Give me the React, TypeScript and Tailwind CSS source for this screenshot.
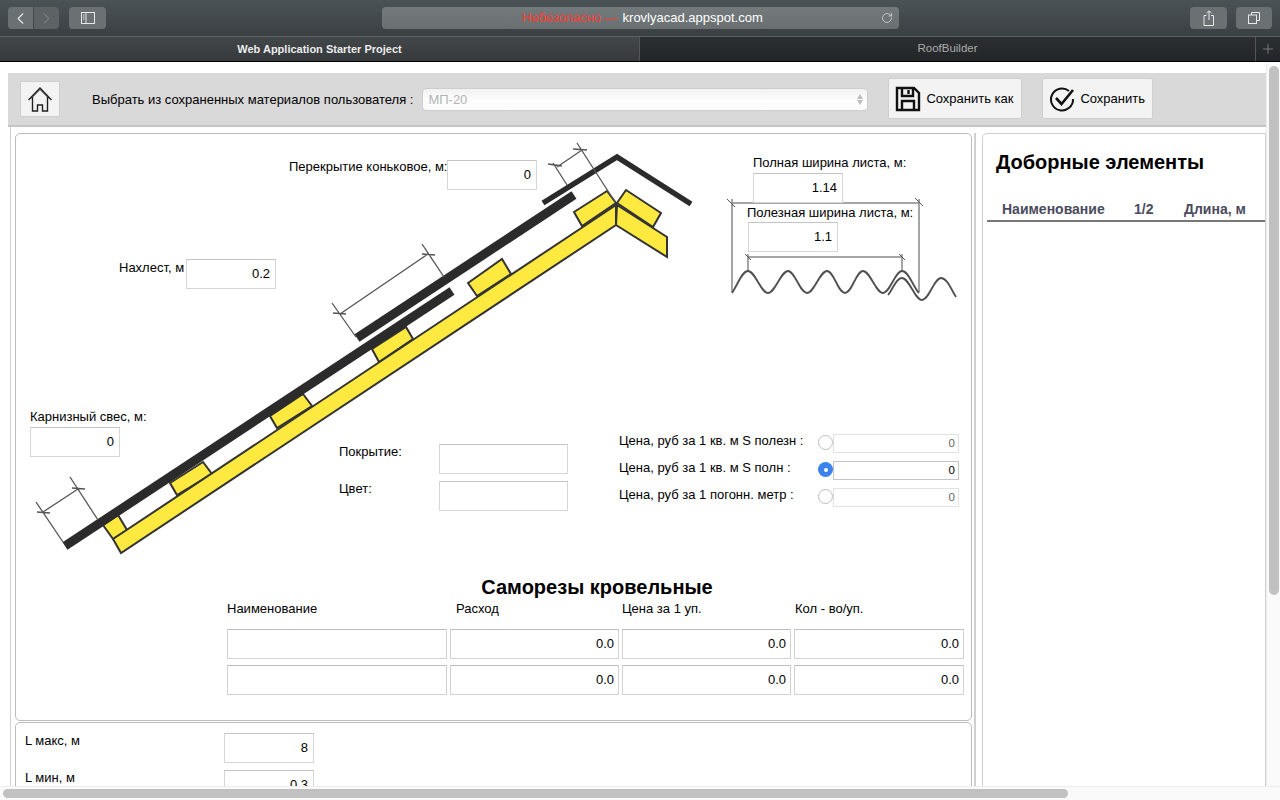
import React from 'react';
import { ChevronLeft, ChevronRight, RotateCw, Plus } from 'lucide-react';

const font = "font-['Liberation_Sans',Arial,sans-serif]";

function Field({ value, className }: { value: string; className: string }) {
  return (
    <div className={`absolute h-[30px] flex items-center justify-end pr-[5px] bg-white border border-[#d6d6d6] border-t-[#c4c4c4] text-[13px] text-black ${className}`}>
      {value}
    </div>
  );
}

function Label({ children, className }: { children: React.ReactNode; className: string }) {
  return <div className={`absolute whitespace-nowrap text-[13px] leading-[15px] text-black ${className}`}>{children}</div>;
}

function PriceRow({ label, value, checked }: { label: string; value: string; checked?: boolean }) {
  return (
    <div className="flex items-center h-[27px]">
      <div className="w-[199px] text-[13px] text-black whitespace-nowrap pb-[3px]">{label}</div>
      {checked ? (
        <div className="w-[15px] h-[15px] rounded-full bg-[#3b82ee] flex items-center justify-center">
          <div className="w-[4px] h-[4px] rounded-full bg-white" />
        </div>
      ) : (
        <div className="w-[15px] h-[15px] rounded-full bg-white border border-[#bdbdbd]" />
      )}
      <div
        className={`w-[126px] h-[19px] mt-[2px] flex items-center justify-end pr-[3px] text-[11.5px] border ${
          checked ? 'border-[#c4c4c4] text-black bg-white' : 'border-[#e2e2e2] text-[#666] bg-white'
        }`}
      >
        {value}
      </div>
    </div>
  );
}

function RoofDrawing() {
  const yellow = '#fde93f';
  const edge = '#333333';
  const dim = '#555555';
  const battens = [
    '103,525 118,515 127,530 113,539',
    '170,483 203,462 212,474 177,495',
    '270,416 303,394 312,406 277,428',
    '372,349 406,327 413,339 379,362',
    '468,283 502,259 511,274 477,296',
    '574,212 607,191 616,203 582,226',
    '626,190 661,213 653,227 617,203',
  ];
  const dims = [
    // eaves overhang
    'M36 502L63 542M70 477L98 520M43 512L78 489M37 512L50 513M72 488L85 489',
    // lap
    'M332 303L356 337M422 244L444 277M340 314L428 254M333 313L346 314M422 254L435 255',
    // ridge overlap
    'M553 163L567 185M577 143L615 202M557 167L582 150M548 164L562 166M573 149L587 150',
  ];
  return (
    <svg className="absolute left-0 top-0" width="980" height="600" viewBox="16 134 980 600">
      {battens.map(p => (
        <polygon key={p} points={p} fill={yellow} stroke={edge} strokeWidth="2" />
      ))}
      <polygon points="113,539 121,553 616,225 616,205" fill={yellow} stroke={edge} strokeWidth="2" />
      <polygon points="617,205 667,237 667,257 616,225" fill={yellow} stroke={edge} strokeWidth="2" />
      <path d="M65 546L452 291" stroke="#2b2b2b" strokeWidth="9" fill="none" />
      <path d="M357 338L574 195" stroke="#2b2b2b" strokeWidth="9" fill="none" />
      <path d="M543 203L617 157L691 204" stroke="#2b2b2b" strokeWidth="5.500" fill="none" />
      {dims.map(d => (
        <path key={d} d={d} stroke={dim} strokeWidth="1.3" fill="none" />
      ))}
      {/* sheet profile */}
      <path d="M732 203H919M732 199V292M919 199V292" stroke="#888" strokeWidth="1.5" fill="none" />
      <path d="M727 199L735 207M915 198L923 206" stroke="#555" strokeWidth="1" fill="none" />
      <path d="M748 257H902M748 254V271M902 254V271" stroke="#888" strokeWidth="1.5" fill="none" />
      <path d="M745 254L751 260M899 254L905 260" stroke="#555" strokeWidth="1" fill="none" />
      <path
        d="M732 293C738 284 742 271 748 271C755 271 761 293 768 293C775 293 781 271 788 271C795 271 800 293 807 293C814 293 820 271 827 271C834 271 838 293 845 293C852 293 856 271 863 271C870 271 876 293 883 293C890 293 895 271 902 271C909 271 913 287 919 293"
        stroke="#505050"
        strokeWidth="1.800"
        fill="none"
      />
      <path
        d="M888 295C893 289 896 278 902 278C909 278 915 300 922 300C929 300 934 278 941 278C947 278 951 289 956 297"
        stroke="#505050"
        strokeWidth="1.800"
        fill="none"
      />
    </svg>
  );
}

function ToolButton({ icon, label, className }: { icon: React.ReactNode; label: string; className: string }) {
  return (
    <div className={`h-[41px] flex items-center bg-[#f3f3f3] border border-[#cfcfcf] rounded-[2px] text-[13px] text-black ${className}`}>
      {icon}
      {label}
    </div>
  );
}

export default function App() {
  return (
    <div className={`w-[1280px] h-[800px] overflow-hidden flex flex-col bg-white ${font}`}>
      {/* browser chrome */}
      <div className="h-[37px] bg-gradient-to-b from-[#4c5356] to-[#3a3f42] border-b border-[#5c6264] flex items-center px-[7px]">
        <div className="w-[25px] h-[22px] ml-px rounded-l-[4px] bg-[#6b7072] flex items-center justify-center">
          <ChevronLeft size={19} strokeWidth={1.4} className="text-[#e8e8e8]" />
        </div>
        <div className="w-[25px] h-[22px] ml-px rounded-r-[4px] bg-[#5d6264] flex items-center justify-center">
          <ChevronRight size={19} strokeWidth={1.2} className="text-[#8d9193]" />
        </div>
        <div className="w-[37px] h-[22px] ml-[10px] rounded-[4px] bg-[#6b7072] flex items-center justify-center">
          <svg width="14" height="12" viewBox="0 0 14 12" fill="none" stroke="#e8e8e8">
            <rect x="0.5" y="0.5" width="13" height="11" />
            <path d="M5 0.5V11.5M2 3H3.5M2 5H3.5M2 7H3.5" />
          </svg>
        </div>
        <div className="ml-[276px] w-[517px] h-[22px] rounded-[4px] bg-gradient-to-b from-[#747a7c] to-[#6a6f71] flex items-center text-[13px]">
          <div className="ml-[140px] text-[#ff3b30] whitespace-nowrap">Небезопасно —</div>
          <div className="ml-[5px] text-white whitespace-nowrap">krovlyacad.appspot.com</div>
          <RotateCw size={12} strokeWidth={1.3} className="ml-auto mr-[6px] text-[#e8e8e8]" />
        </div>
        <div className="ml-auto w-[37px] h-[22px] rounded-[4px] bg-[#6b7072] flex items-center justify-center">
          <svg width="12" height="16" viewBox="0 0 12 16" fill="none" stroke="#e8e8e8">
            <path d="M3.5 5.5H1V15.5H10.5V5.5H8M6 10V1M3.5 3L6 .8L8.500 3" />
          </svg>
        </div>
        <div className="ml-[9px] w-[36px] h-[22px] rounded-[4px] bg-[#6b7072] flex items-center justify-center mr-px">
          <svg width="12" height="12" viewBox="0 0 12 12" fill="none" stroke="#e8e8e8">
            <rect x="0.5" y="3" width="8" height="8.500" />
            <path d="M3.500 3V.5H11.500V8.500H8.500" />
          </svg>
        </div>
      </div>
      <div className="h-[25px] flex items-center border-b border-black text-[11px] font-bold">
        <div className="w-[639px] h-full bg-gradient-to-b from-[#42474a] to-[#363a3d] flex items-center justify-center text-[#ececec]">
          Web Application Starter Project
        </div>
        <div className="w-[616px] h-full bg-gradient-to-b from-[#2c2f31] to-[#232628] flex items-center justify-center text-[11.500px] text-[#a9abac] font-normal border-l border-[#555]">
          RoofBuilder
        </div>
        <div className="flex-1 h-full bg-gradient-to-b from-[#2c2f31] to-[#232628] border-l border-[#555] flex items-center justify-center">
          <Plus size={16} strokeWidth={1} className="text-[#999]" />
        </div>
      </div>

      {/* page */}
      <div className="relative flex-1 overflow-hidden pt-[11px] pl-[8px]">
        <div className="w-[1259px] h-[54px] bg-[#d9d9d9] border-b-2 border-[#c6c6c6] flex items-start text-[13px] text-black">
          <div className="ml-[12px] mt-[8px] w-[40px] h-[36px] bg-[#f3f3f3] border border-[#cfcfcf] rounded-[2px] flex items-center justify-center">
            <svg width="26" height="27" viewBox="0 0 26 27" fill="none" stroke="#222" strokeWidth="1.4">
              <path d="M1.500 14L13 2L24.500 14M5.500 11V25H10.500V19H15.500V25H20.500V11" />
              <path d="M4 12.500L13 3.500L22 12.500" strokeWidth="1" />
            </svg>
          </div>
          <div className="ml-[32px] mt-[17px] whitespace-nowrap">Выбрать из сохраненных материалов пользователя :</div>
          <div className="ml-[9px] mt-[15px] w-[446px] h-[23px] rounded-[4px] border border-[#cdcdcd] bg-gradient-to-b from-[#f1f1f1] via-[#fdfdfd] to-[#fbfbfb] flex items-center pl-[5px] text-[#b3b3b3] relative">
            МП-20
            <div className="absolute right-[4px] top-[5px] flex flex-col gap-[1px]">
              <div className="w-0 h-0 border-x-[3px] border-x-transparent border-b-[5px] border-b-[#bdbdbd]" />
              <div className="w-0 h-0 border-x-[3px] border-x-transparent border-t-[5px] border-t-[#bdbdbd]" />
            </div>
          </div>
          <ToolButton
            className="ml-[20px] mt-[5px] w-[134px] pl-[6px]"
            label="Сохранить как"
            icon={
              <svg width="26" height="26" viewBox="0 0 26 26" fill="none" stroke="#111" strokeWidth="2.4" className="mr-[5px]">
                <path d="M2 2H19L24 7V24H2ZM7 2V10H18V2M13.500 4V8M7 24V15H19V24" />
              </svg>
            }
          />
          <ToolButton
            className="ml-[20px] mt-[5px] w-[111px] pl-[6px]"
            label="Сохранить"
            icon={
              <svg width="26" height="26" viewBox="0 0 26 26" fill="none" stroke="#111" strokeWidth="2" className="mr-[5px]">
                <path d="M20 5A11 11 0 1 0 24 13" />
                <path d="M7 12L12.500 18L24 4" strokeWidth="2.600" />
              </svg>
            }
          />
        </div>

        <div className="ml-[2px] flex items-start border-l border-[#d0d0d0] pl-[4px] pt-[6px] h-[700px]">
          <div className="w-[961px] h-[694px] border-r-2 border-[#d0d0d0] shrink-0">
            <div className="w-[957px] flex flex-col gap-px">
              {/* roof panel */}
              <div className="relative h-[588px] border border-[#bcbcbc] rounded-[5px] bg-white">
                <RoofDrawing />
                <Label className="left-[273px] top-[25px]">Перекрытие коньковое, м:</Label>
                <Field className="left-[431px] top-[26px] w-[90px]" value="0" />
                <Label className="left-[737px] top-[21px]">Полная ширина листа, м:</Label>
                <Field className="left-[737px] top-[39px] w-[90px]" value="1.14" />
                <Label className="left-[731px] top-[71px]">Полезная ширина листа, м:</Label>
                <Field className="left-[732px] top-[88px] w-[90px]" value="1.1" />
                <Label className="left-[103px] top-[126px]">Нахлест, м</Label>
                <Field className="left-[170px] top-[125px] w-[90px]" value="0.2" />
                <Label className="left-[14px] top-[275px]">Карнизный свес, м:</Label>
                <Field className="left-[14px] top-[293px] w-[90px]" value="0" />
                <Label className="left-[323px] top-[310px]">Покрытие:</Label>
                <Field className="left-[423px] top-[310px] w-[129px]" value="" />
                <Label className="left-[323px] top-[347px]">Цвет:</Label>
                <Field className="left-[423px] top-[347px] w-[129px]" value="" />
                <div className="absolute left-[603px] top-[295px]">
                  <PriceRow label="Цена, руб за 1 кв. м S полезн :" value="0" />
                  <PriceRow label="Цена, руб за 1 кв. м S полн :" value="0" checked />
                  <PriceRow label="Цена, руб за 1 погонн. метр :" value="0" />
                </div>
                <div className="absolute left-[211px] top-[441px] w-[737px]">
                  <div className="text-[20px] leading-[24px] font-bold text-center text-black pl-[3px]">Саморезы кровельные</div>
                  <div className="grid grid-cols-[220px_169px_169px_170px] gap-x-[3px] gap-y-[6px] text-[13px] text-black">
                    <div className="h-[24px]">Наименование</div>
                    <div className="h-[24px] pl-[6px]">Расход</div>
                    <div className="h-[24px]">Цена за 1 уп.</div>
                    <div className="h-[24px] pl-px">Кол - во/уп.</div>
                    {['', '0.0', '0.0', '0.0', '', '0.0', '0.0', '0.0'].map((v, i) => (
                      <div
                        key={i}
                        className="h-[30px] border border-[#d2d2d2] border-t-[#bdbdbd] bg-white flex items-center justify-end pr-[4px]"
                      >
                        {v}
                      </div>
                    ))}
                  </div>
                </div>
              </div>
              {/* lengths panel */}
              <div className="relative h-[120px] border border-[#bcbcbc] rounded-[5px] bg-white">
                <Label className="left-[9px] top-[10px]">L макс, м</Label>
                <Field className="left-[208px] top-[10px] w-[90px]" value="8" />
                <Label className="left-[9px] top-[47px]">L мин, м</Label>
                <Field className="left-[208px] top-[47px] w-[90px]" value="0.3" />
              </div>
            </div>
          </div>
          {/* side panel */}
          <div className="ml-[6px] w-[284px] h-[660px] border border-[#d0d0d0] rounded-tl-[5px] bg-white pt-[16px]">
            <div className="pl-[13px] text-[20px] leading-[24px] font-bold text-black">Доборные элементы</div>
            <div className="mt-[26px] ml-[4px] flex border-b-2 border-[#777] text-[14px] leading-[18px] font-bold text-[#4a4a5e] h-[22px]">
              <div className="pl-[15px] w-[147px]">Наименование</div>
              <div className="w-[50px]">1/2</div>
              <div>Длина, м</div>
            </div>
          </div>
        </div>

        {/* scrollbars */}
        <div className="absolute right-0 top-0 bottom-0 w-[14px] bg-[#fafafa] border-l border-[#ededed]">
          <div className="mt-[4px] ml-[2px] w-[10px] h-[529px] rounded-full bg-[#c1c1c1]" />
        </div>
        <div className="absolute left-0 right-0 bottom-0 h-[14px] bg-[#fafafa] border-t border-[#ededed]">
          <div className="mt-[2px] ml-[3px] w-[1065px] h-[9px] rounded-full bg-[#c1c1c1]" />
        </div>
      </div>
    </div>
  );
}
